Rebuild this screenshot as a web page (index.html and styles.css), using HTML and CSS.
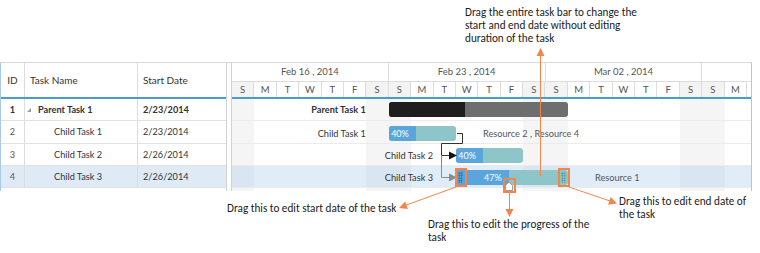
FILE: index.html
```html
<!DOCTYPE html>
<html lang="en">
<head>
    <meta charset="UTF-8">
    <title>Gantt - Task editing</title>
    <link rel="stylesheet" href="styles.css">
</head>
<body>
    <div class="page">
        <div class="note note-top">Drag the entire task bar to change the<br>start and end date without editing<br>duration of the task</div>

        <div class="gantt">
            <div class="grid">
                <div class="grid-head">
                    <div class="cell c-id">ID</div>
                    <div class="cell c-name">Task Name</div>
                    <div class="cell c-date">Start Date</div>
                </div>
                <div class="grid-row parent">
                    <div class="cell c-id">1</div>
                    <div class="cell c-name"><span class="toggle"></span>Parent Task 1</div>
                    <div class="cell c-date">2/23/2014</div>
                </div>
                <div class="grid-row child">
                    <div class="cell c-id">2</div>
                    <div class="cell c-name">Child Task 1</div>
                    <div class="cell c-date">2/23/2014</div>
                </div>
                <div class="grid-row child">
                    <div class="cell c-id">3</div>
                    <div class="cell c-name">Child Task 2</div>
                    <div class="cell c-date">2/26/2014</div>
                </div>
                <div class="grid-row child selected">
                    <div class="cell c-id">4</div>
                    <div class="cell c-name">Child Task 3</div>
                    <div class="cell c-date">2/26/2014</div>
                </div>
            </div>

            <div class="splitter"></div>

            <div class="chart">
                <div class="weeks">
                    <div class="week">Feb 16 , 2014</div>
                    <div class="week">Feb 23 , 2014</div>
                    <div class="week">Mar 02 , 2014</div>
                    <div class="week"></div>
                </div>
                <div class="days">
                    <div class="day off">S</div><div class="day">M</div><div class="day">T</div><div class="day">W</div><div class="day">T</div><div class="day">F</div><div class="day off">S</div>
                    <div class="day off">S</div><div class="day">M</div><div class="day">T</div><div class="day">W</div><div class="day">T</div><div class="day">F</div><div class="day off">S</div>
                    <div class="day off">S</div><div class="day">M</div><div class="day">T</div><div class="day">W</div><div class="day">T</div><div class="day">F</div><div class="day off">S</div>
                    <div class="day off">S</div><div class="day">M</div>
                </div>

                <div class="chart-body">
                    <div class="chart-row">
                        <div class="bar summary" style="left:156.8px;width:179.2px">
                            <div class="progress" style="width:76px"></div>
                            <span class="name">Parent Task 1</span>
                        </div>
                    </div>
                    <div class="chart-row">
                        <div class="bar" style="left:156.8px;width:67.2px">
                            <div class="progress" style="width:27px">40%</div>
                            <span class="name">Child Task 1</span>
                            <span class="res">Resource 2 , Resource 4</span>
                        </div>
                    </div>
                    <div class="chart-row">
                        <div class="bar" style="left:224px;width:67.2px">
                            <div class="progress" style="width:27px">40%</div>
                            <span class="name">Child Task 2</span>
                        </div>
                    </div>
                    <div class="chart-row selected">
                        <div class="bar" style="left:224px;width:112px">
                            <div class="progress" style="width:52.6px">47%
                                <svg class="knob" width="10" height="10" viewBox="0 0 10 10"><polygon points="1.5,9.5 8.5,9.5 8.5,4.5 5,1 1.5,4.5" /></svg>
                            </div>
                            <span class="grip grip-left"></span>
                            <span class="grip grip-right"></span>
                            <span class="name">Child Task 3</span>
                            <span class="res">Resource 1</span>
                        </div>
                    </div>

                    <!-- predecessor lines -->
                    <svg class="links" width="519" height="92">
                        <polyline class="link" points="225,34.5 230.5,34.5 230.5,44.5 209.5,44.5 209.5,56.5 218,56.5" />
                        <polygon class="link-head" points="217,52.5 225,56.5 217,60.5" />
                        <polyline class="link dim" points="209.5,56.5 209.5,78.5 218,78.5" />
                        <polygon class="link-head dim" points="217,74.5 225,78.5 217,82.5" />
                    </svg>
                </div>
            </div>
        </div>

        <div class="note note-start">Drag this to edit start date of the task</div>
        <div class="note note-progress">Drag this to edit the progress of the<br>task</div>
        <div class="note note-end">Drag this to edit end date of<br>the task</div>

        <!-- callout marks -->
        <svg class="callouts" width="760" height="253">
            <line x1="540.5" y1="55" x2="540.5" y2="176" />
            <polygon points="540.5,48 536.5,56 544.5,56" />

            <rect x="456" y="169" width="10" height="17" />
            <line x1="456" y1="187" x2="405" y2="205.5" />
            <polygon points="399,208 407.9,209 405.1,201.5" />

            <rect x="504" y="179" width="11" height="13" />
            <line x1="509.5" y1="193" x2="509.5" y2="210" />
            <polygon points="509.5,217 505.5,209 513.5,209" />

            <rect x="559" y="169" width="10" height="17" />
            <line x1="569" y1="187" x2="610" y2="201" />
            <polygon points="617,203.5 608.1,204.7 610.7,197.1" />
        </svg>
    </div>
</body>
</html>
```

FILE: styles.css
```css
body {
    margin: 0;
    background: #fff;
    color: #333;
    font-family: "Segoe UI", Lato, sans-serif;
}
.page {
    position: relative;
    width: 760px;
    height: 253px;
    overflow: hidden;
}

/* callout texts */
.note {
    font-family: Calibri, Lato, sans-serif;
    font-size: 11.2px;
    line-height: 13px;
    color: #1a1a1a;
    white-space: nowrap;
}
.note-top {
    height: 62px;
    box-sizing: border-box;
    padding: 6px 0 0 465px;
}
.note-start,
.note-progress,
.note-end {
    position: absolute;
}
.note-start {
    left: 227px;
    top: 202px;
}
.note-progress {
    left: 428px;
    top: 218px;
}
.note-end {
    left: 619px;
    top: 195px;
}
.callouts {
    position: absolute;
    left: 0;
    top: 0;
    pointer-events: none;
}
.callouts line {
    stroke: #f4854a;
    stroke-width: 1;
}
.callouts polygon {
    fill: #f4854a;
}
.callouts rect {
    fill: none;
    stroke: #f4854a;
    stroke-width: 2;
}

/* gantt control */
.gantt {
    display: flex;
    width: 752px;
    height: 129px;
    box-sizing: border-box;
    border-top: 1px solid #d8d8d8;
    border-left: 1px solid #a8c9ec;
    border-right: 1px solid #a8c9ec;
    font-size: 9.2px;
}
.grid {
    width: 226px;
    flex: none;
    box-sizing: border-box;
    border-right: 1px solid #d2d2d2;
}
.grid-head,
.grid-row {
    display: grid;
    grid-template-columns: 24px 113px 1fr;
}
.grid-head {
    height: 36px;
    box-sizing: border-box;
    border-bottom: 2px solid #4a9ad8;
    font-size: 10px;
}
.grid-row {
    height: 22.25px;
    box-sizing: border-box;
    border-bottom: 1px solid #e2e2e2;
}
.cell {
    display: flex;
    align-items: center;
    box-sizing: border-box;
    border-right: 1px solid #dcdcdc;
    white-space: nowrap;
}
.cell.c-date {
    border-right: none;
    padding-left: 5px;
}
.c-id {
    justify-content: center;
}
.grid-head .c-name {
    padding-left: 5px;
}
.grid-row .c-id {
    color: #555;
}
.parent .cell {
    font-weight: bold;
}
.parent .c-name {
    padding-left: 2px;
}
.parent .c-id {
    color: #333;
}
.child .c-name {
    padding-left: 29px;
}
.grid-row.selected {
    background: #deebf6;
}
.toggle {
    width: 0;
    height: 0;
    border-left: 4px solid transparent;
    border-bottom: 4px solid #9a9a9a;
    margin-right: 7px;
}
.splitter {
    width: 4px;
    flex: none;
}

.chart {
    flex: 1;
    min-width: 0;
    border-left: 1px solid #d2d2d2;
}
.weeks {
    display: grid;
    grid-template-columns: repeat(3, 156.8px) 1fr;
    height: 19px;
    box-sizing: border-box;
    border-bottom: 1px solid #dcdcdc;
    font-size: 9.5px;
}
.week {
    border-right: 1px solid #dcdcdc;
    text-align: center;
    line-height: 18px;
    color: #555;
}
.week:last-child {
    border-right: none;
}
.days {
    display: grid;
    grid-template-columns: repeat(23, 22.4px);
    height: 17px;
    box-sizing: border-box;
    border-bottom: 2px solid #4a9ad8;
    font-size: 9.5px;
}
.day {
    border-right: 1px solid #dcdcdc;
    text-align: center;
    line-height: 15px;
    color: #555;
}
.day.off {
    background: #f3f3f3;
}
.chart-body {
    position: relative;
    height: 92px;
    background: repeating-linear-gradient(to right, #f5f5f5 0 22.4px, transparent 22.4px 134.4px, #f5f5f5 134.4px 156.8px);
}
.chart-row {
    position: relative;
    height: 22.25px;
    box-sizing: border-box;
    border-bottom: 1px solid #ebebeb;
}
.chart-row.selected {
    background: rgba(168, 204, 236, 0.36);
}

/* task bars */
.bar {
    position: absolute;
    top: 4.5px;
    height: 15px;
    border-radius: 3px;
    background: #8ec5c8;
}
.bar.summary {
    top: 3px;
    background: #6e6e6e;
}
.progress {
    position: relative;
    height: 100%;
    box-sizing: border-box;
    padding-right: 7px;
    border-radius: 3px 0 0 3px;
    background: #5aa5dc;
    color: #fff;
    font-size: 9px;
    line-height: 15px;
    text-align: right;
}
.summary .progress {
    background: #1e1e1e;
}
.bar .name,
.bar .res {
    position: absolute;
    top: 0;
    line-height: 15px;
    white-space: nowrap;
}
.bar .name {
    right: calc(100% + 23px);
}
.summary .name {
    font-weight: bold;
}
.bar .res {
    left: calc(100% + 27px);
    color: #555;
}
.grip {
    position: absolute;
    top: 2px;
    width: 5px;
    height: 11px;
    background: radial-gradient(circle, #2f72aa 0.8px, transparent 1.1px) 0 0 / 2.5px 2.5px;
}
.grip-left {
    left: 2px;
}
.grip-right {
    right: 2px;
    background-image: radial-gradient(circle, #5e9ea1 0.8px, transparent 1.1px);
}
.knob {
    position: absolute;
    right: -5px;
    top: 11px;
}
.knob polygon {
    fill: #fff;
    stroke: #9a9a9a;
    stroke-width: 1;
}
.links {
    position: absolute;
    left: 0;
    top: 0;
    pointer-events: none;
}
.link {
    fill: none;
    stroke: #333;
    stroke-width: 1;
}
.link-head {
    fill: #111;
}
.link.dim {
    stroke: #8c8c8c;
}
.link-head.dim {
    fill: #8c8c8c;
}
```
